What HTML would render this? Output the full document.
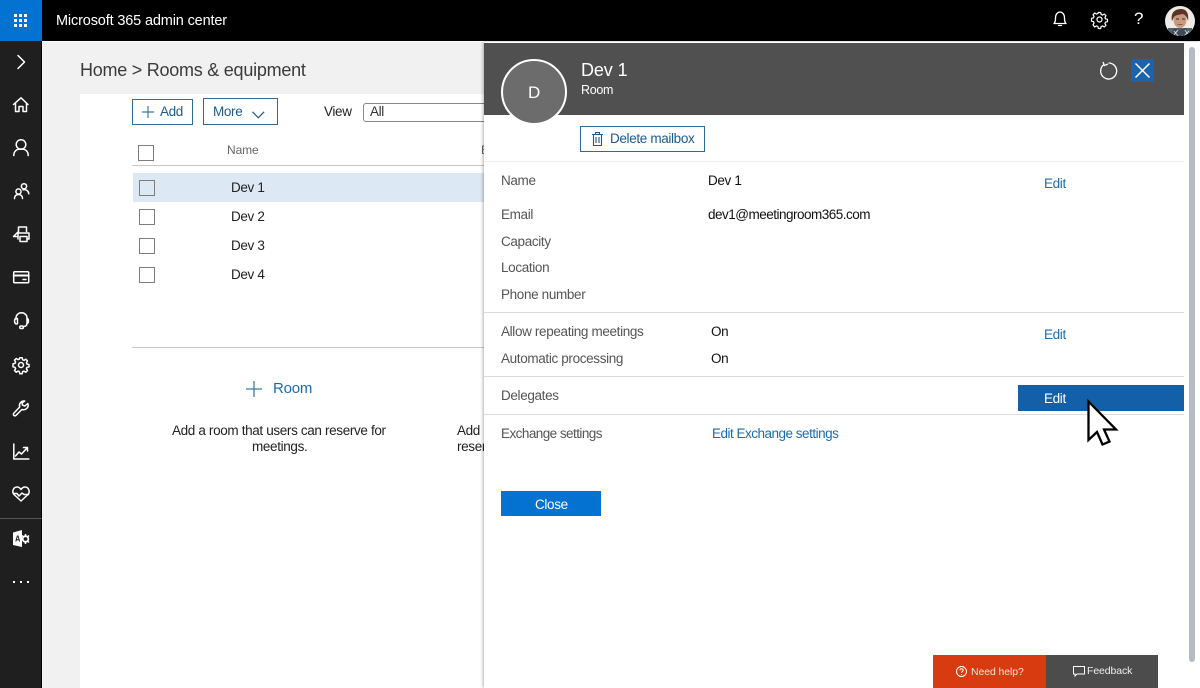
<!DOCTYPE html>
<html>
<head>
<meta charset="utf-8">
<style>
html,body{margin:0;padding:0}
body{width:1200px;height:688px;overflow:hidden;position:relative;background:#fff;font-family:"Liberation Sans",sans-serif;color:#222;font-size:13.5px}
.a,.t{position:absolute}
.t{white-space:nowrap;line-height:18px;letter-spacing:-.35px}
.cb{position:absolute;width:14px;height:14px;border:1px solid #7d7d7d;background:#fff}
.hr{position:absolute;height:1px;background:#dcdcdc}
.lab{color:#555}
.lnk{color:#1a6dac}
svg{position:absolute;overflow:visible}
.ic{fill:none;stroke:#fff;stroke-width:1.5;stroke-linecap:round;stroke-linejoin:round}
.btn{box-sizing:border-box;border:1px solid #2f6b97}
</style>
</head>
<body>
<!-- page bg -->
<div class="a" style="left:42px;top:42px;width:1158px;height:646px;background:#f1f1f1"></div>
<div class="a" style="left:80px;top:94px;width:410px;height:594px;background:#fff"></div>

<!-- top bar -->
<div class="a" style="left:0;top:0;width:1200px;height:41px;background:#000"></div>
<div class="a" style="left:0;top:0;width:42px;height:41px;background:#0472d0"></div>
<svg style="left:14px;top:14px" width="14" height="14" fill="#fff">
<rect x="0" y="0" width="3" height="3"/><rect x="5" y="0" width="3" height="3"/><rect x="10" y="0" width="3" height="3"/>
<rect x="0" y="5" width="3" height="3"/><rect x="5" y="5" width="3" height="3"/><rect x="10" y="5" width="3" height="3"/>
<rect x="0" y="10" width="3" height="3"/><rect x="5" y="10" width="3" height="3"/><rect x="10" y="10" width="3" height="3"/>
</svg>
<div class="t" style="left:56px;top:12px;color:#fff;font-size:14.5px;letter-spacing:-.15px">Microsoft 365 admin center</div>

<!-- top right icons -->
<svg class="ic" style="left:1052px;top:11px;stroke-width:1.300" width="16" height="16"><path d="M2 12.500c1.500-1.500 1.500-3 1.500-5.500C3.500 3.500 5.500 1 8 1s4.500 2.500 4.500 6c0 2.500 0 4 1.500 5.500z"/><path d="M6.500 14.500h3"/></svg>
<svg class="ic" style="left:1092px;top:12px;stroke-width:1.200" width="16" height="16"><circle cx="7.500" cy="7.500" r="2.500"/><path d="M6.300 0.500h2.400l.4 2 1.400.6 1.800-1.100 1.700 1.700-1.100 1.800.6 1.400 2 .4v2.400l-2 .4-.6 1.400 1.100 1.800-1.700 1.700-1.800-1.100-1.400.6-.4 2H6.300l-.4-2-1.400-.6-1.800 1.100L1 12.800l1.100-1.800-.6-1.400-2-.4V6.300l2-.4.6-1.400L1 2.700 2.700 1l1.800 1.100 1.400-.6z"/></svg>
<div class="t" style="left:1134px;top:10px;color:#fff;font-size:17px;letter-spacing:0">?</div>
<svg style="left:1165px;top:6px" width="30" height="30" viewBox="0 0 30 30">
<defs><clipPath id="av"><circle cx="15" cy="15" r="15"/></clipPath></defs>
<g clip-path="url(#av)">
<rect width="30" height="30" fill="#efeae6"/>
<rect x="3" y="22" width="24" height="8" fill="#56606a"/>
<path d="M5 30l4-8 6 2 6-2 4 8z" fill="#3e4a55"/>
<path d="M9 25l4 5M13 24l-5 6M20 24l4 6M24 25l-5 5" stroke="#c9d0d6" stroke-width="1" fill="none"/>
<ellipse cx="15" cy="14" rx="6.500" ry="8" fill="#c99a80"/>
<path d="M7 15C5 5 12 3 16 3c6 0 8 5 7 12-1-4-3-7-6-7-3 1-7 1-8 3z" fill="#5a3426"/>
<rect x="11" y="12.500" width="3" height="1" fill="#3a2a20"/><rect x="17" y="12.500" width="3" height="1" fill="#3a2a20"/>
<rect x="12.500" y="18" width="5" height="1" fill="#8b5a4a"/>
</g></svg>

<!-- left nav -->
<div class="a" style="left:0;top:41px;width:42px;height:647px;background:#1f1f1f;border-right:1px solid #000;box-sizing:border-box"></div>
<div class="a" style="left:0;top:518px;width:42px;height:1px;background:#555"></div>
<svg class="ic" style="left:17px;top:55px" width="10" height="14"><path d="M1 .5l6.500 6.500-6.500 6.500"/></svg>
<svg class="ic" style="left:13px;top:97px" width="16" height="16"><path d="M.5 7.500L8 .8l7 6.700M2.500 6v8.500h3.500v-5h4v5h3.500V6"/></svg>
<svg class="ic" style="left:13px;top:139px" width="16" height="18"><circle cx="8" cy="5.500" r="4.800"/><path d="M.8 16.500c0-4.500 3-6.500 7.200-6.500s7.200 2 7.200 6.500"/></svg>
<svg class="ic" style="left:14px;top:183px" width="15" height="16"><circle cx="10" cy="3.300" r="2.600"/><circle cx="4.500" cy="8.500" r="2.600"/><path d="M.5 15.500c0-2.500 1.500-4 4-4s4 1.500 4 4M9 6.800c3-.8 5.500 1 5.800 4"/></svg>
<svg class="ic" style="left:13px;top:226px" width="17" height="17"><path d="M5.500 6V1h8v4.500M5 10.500H.5L5 6"/><path d="M5 13V7h11v6h-2"/><rect x="7" y="10.500" width="7" height="5"/></svg>
<svg class="ic" style="left:13px;top:271px" width="16" height="13"><rect x=".7" y=".7" width="15" height="11" rx="1"/><path d="M.7 4.500h15" stroke-width="2"/><path d="M10 8.500h3"/></svg>
<svg class="ic" style="left:14px;top:312px" width="15" height="18"><path d="M2 7V6C2 3 4.300.8 7.500.8S13 3 13 6v5c0 2.500-1.500 3.500-3.500 3.500"/><path d="M2 6.500c-1.200.3-1.400 1-1.400 2v1c0 1 .6 2 1.400 2.500 .8 0 1.500 0 1.500-.5V6.500zM13 6.500c1 .3 1.400 1 1.400 2v1c0 1-.6 1.800-1.400 1.800"/><rect x="5.800" y="14" width="3.500" height="2.500" rx="1"/></svg>
<svg class="ic" style="left:13px;top:357px" width="16" height="16"><circle cx="8" cy="8" r="2.500"/><path d="M6.800 .7h2.400l.4 2 1.400.6 1.800-1.100 1.700 1.700-1.100 1.800.6 1.400 2 .4v2.400l-2 .4-.6 1.400 1.100 1.800-1.700 1.700-1.800-1.100-1.400.6-.4 2H6.800l-.4-2-1.400-.6-1.800 1.100-1.700-1.700 1.100-1.800-.6-1.400-2-.4V6.800l2-.4.6-1.400-1.100-1.800 1.700-1.700 1.800 1.100 1.400-.6z"/></svg>
<svg class="ic" style="left:13px;top:400px" width="17" height="17"><path d="M10.500 1a4.500 4.500 0 0 0-3.800 6L1 13c-.8.8-.8 1.800-.2 2.400s1.700.6 2.400-.2l5.800-5.800A4.500 4.500 0 0 0 14.800 3.500L12 6l-2.500-.8L9 3l2.700-2z"/></svg>
<svg class="ic" style="left:13px;top:444px" width="16" height="16"><path d="M.8 0v15h15"/><path d="M2.500 12L6 8l2.500 2 5.500-6M10.500 3.500H14.500V7"/></svg>
<svg class="ic" style="left:12px;top:486px" width="18" height="16"><path d="M9 15L2 8.500C-.5 5.500 1.500 1 5 1c2 0 3 1 4 2.500C10 2 11 1 13 1c3.500 0 5.500 4.500 3 7.500z"/><path d="M1.500 7.500h3.500l2 2.500 3-3 2 1.500h4.500"/></svg>
<svg style="left:12px;top:530px" width="18" height="18"><path d="M1 2.500l9-2.500v17l-9-2z" fill="#fff"/><path d="M3.800 11.500l1.500-5.500h.8l1.500 5.500M4.300 9.800h2.800" stroke="#1f1f1f" fill="none" stroke-width="1"/><circle cx="13.500" cy="9" r="2.800" fill="none" stroke="#fff" stroke-width="1.800"/><path d="M13.500 4v2M13.500 12v2M17 5.500l-1.500 1.500M17 12.500L15.500 11M10 5.500l1.500 1.500" stroke="#fff" stroke-width="1.500" fill="none"/></svg>
<svg style="left:13px;top:581px" width="16" height="3" fill="#fff"><rect x="0" y="0" width="2" height="2"/><rect x="7" y="0" width="2" height="2"/><rect x="14" y="0" width="2" height="2"/></svg>

<!-- breadcrumb -->
<div class="t" style="left:80px;top:58px;font-size:18px;line-height:24px;color:#3b3b3b;letter-spacing:-.25px">Home &gt; Rooms &amp; equipment</div>

<!-- toolbar -->
<div class="a btn" style="left:132px;top:99px;width:61px;height:26px"></div>
<svg style="left:142px;top:106px" width="12" height="12" stroke="#3a7ba8" stroke-width="1.200"><path d="M6 0v12M0 6h12"/></svg>
<div class="t lnk" style="left:160px;top:103px;color:#1d5a8e">Add</div>
<div class="a btn" style="left:203px;top:98px;width:75px;height:27px"></div>
<div class="t lnk" style="left:213px;top:103px;color:#1d5a8e">More</div>
<svg style="left:252px;top:111px" width="13" height="8" fill="none" stroke="#1d5a8e" stroke-width="1.200"><path d="M.5 .8l5.800 6 5.800-6"/></svg>
<div class="t" style="left:324px;top:103px">View</div>
<div class="a" style="left:363px;top:103px;width:130px;height:17px;border:1px solid #888;border-radius:3px;background:#fff"></div>
<div class="t" style="left:370px;top:103px;color:#333">All</div>

<!-- table -->
<div class="cb" style="left:138px;top:145px"></div>
<div class="t" style="left:227px;top:141px;font-size:12px;letter-spacing:-.1px;color:#666">Name</div>
<div class="t" style="left:481px;top:141px;font-size:12px;color:#666">E</div>
<div class="a" style="left:132px;top:165px;width:352px;height:1px;background:#c8c8c8"></div>
<div class="a" style="left:133px;top:173px;width:351px;height:29px;background:#dce8f3"></div>
<div class="cb" style="left:139px;top:180px;background:#dce8f3"></div>
<div class="t" style="left:231px;top:179px">Dev 1</div>
<div class="cb" style="left:139px;top:209px"></div>
<div class="t" style="left:231px;top:208px">Dev 2</div>
<div class="cb" style="left:139px;top:238px"></div>
<div class="t" style="left:231px;top:237px">Dev 3</div>
<div class="cb" style="left:139px;top:267px"></div>
<div class="t" style="left:231px;top:266px">Dev 4</div>

<div class="a" style="left:132px;top:347px;width:352px;height:1px;background:#c8c8c8"></div>
<svg style="left:246px;top:381px" width="16" height="16" stroke="#3a7ba8" stroke-width="1.300"><path d="M8 0v16M0 8h16"/></svg>
<div class="t lnk" style="left:273px;top:379px;font-size:15px;line-height:20px;letter-spacing:-.2px">Room</div>
<div class="t" style="left:172px;top:422px">Add a room that users can reserve for</div>
<div class="t" style="left:252px;top:438px">meetings.</div>
<div class="t" style="left:457px;top:422px">Add</div>
<div class="t" style="left:457px;top:438px">reser</div>

<!-- panel -->
<div class="a" style="left:484px;top:42px;width:716px;height:646px;background:#fff;box-shadow:-1px 0 3px rgba(0,0,0,.3)"></div>
<div class="a" style="left:484px;top:43px;width:700px;height:72px;background:#505050"></div>
<div class="a" style="left:1184px;top:42px;width:16px;height:646px;background:#fff"></div>
<div class="a" style="left:1189px;top:47px;width:6px;height:615px;background:#b4bbc3;border-radius:3px"></div>

<div class="a" style="left:501px;top:59px;width:62px;height:62px;border:2px solid #fff;border-radius:50%;background:#6c6c6c"></div>
<div class="t" style="left:528px;top:84px;color:#fff;font-size:17px;letter-spacing:0">D</div>
<div class="t" style="left:581px;top:58px;color:#fff;font-size:18px;line-height:24px;letter-spacing:-.1px">Dev 1</div>
<div class="t" style="left:581px;top:81px;color:#fff;font-size:12.500px;letter-spacing:-.3px">Room</div>

<svg style="left:1100px;top:62px" width="18" height="18" fill="none" stroke="#fff" stroke-width="1.300"><path d="M4 2.500A8 8 0 1 0 8.500 1"/><path d="M3 0L4.500 3.500 8 2" /></svg>
<div class="a" style="left:1131px;top:59px;width:23px;height:23px;background:#1c62ac;border-radius:2px"></div>
<svg style="left:1135px;top:63px" width="15" height="15" stroke="#fff" stroke-width="1.500"><path d="M.5 .5l14 14M14.500 .5l-14 14"/></svg>

<div class="a btn" style="left:580px;top:126px;width:125px;height:26px"></div>
<svg style="left:592px;top:132px" width="11" height="14" fill="none" stroke="#1d5a8e" stroke-width="1.100"><path d="M0 2.500h11M3.500 2.500V.6h4v1.900M1.500 2.500v11h8v-11M4 5v6M7 5v6"/></svg>
<div class="t" style="left:610px;top:130px;color:#1d5a8e">Delete mailbox</div>
<div class="hr" style="left:484px;top:161px;width:700px;background:#eee"></div>

<div class="t lab" style="left:501px;top:172px">Name</div>
<div class="t" style="left:708px;top:172px;color:#111">Dev 1</div>
<div class="t lnk" style="left:1044px;top:175px">Edit</div>
<div class="t lab" style="left:501px;top:206px">Email</div>
<div class="t" style="left:708px;top:206px;color:#111;letter-spacing:-.5px">dev1@meetingroom365.com</div>
<div class="t lab" style="left:501px;top:233px">Capacity</div>
<div class="t lab" style="left:501px;top:259px">Location</div>
<div class="t lab" style="left:501px;top:286px">Phone number</div>
<div class="hr" style="left:484px;top:312px;width:700px"></div>
<div class="t lab" style="left:501px;top:323px">Allow repeating meetings</div>
<div class="t" style="left:711px;top:323px;color:#111">On</div>
<div class="t lnk" style="left:1044px;top:326px">Edit</div>
<div class="t lab" style="left:501px;top:350px">Automatic processing</div>
<div class="t" style="left:711px;top:350px;color:#111">On</div>
<div class="hr" style="left:484px;top:376px;width:700px"></div>
<div class="t lab" style="left:501px;top:387px">Delegates</div>
<div class="a" style="left:1018px;top:385px;width:166px;height:26px;background:#1460a8"></div>
<div class="t" style="left:1044px;top:390px;color:#fff">Edit</div>
<div class="hr" style="left:484px;top:414px;width:700px"></div>
<div class="t lab" style="left:501px;top:425px;letter-spacing:-.55px">Exchange settings</div>
<div class="t lnk" style="left:712px;top:425px;letter-spacing:-.5px">Edit Exchange settings</div>

<div class="a" style="left:501px;top:491px;width:100px;height:25px;background:#0472d0"></div>
<div class="t" style="left:535px;top:496px;color:#fff">Close</div>

<!-- cursor -->
<svg style="left:1087px;top:400px" width="31" height="47" viewBox="0 0 31 47"><path d="M1.500 1.500V40l8.500-8 5.500 12.500 7-3-5.500-12H29z" fill="#fff" stroke="#000" stroke-width="2.300" stroke-linejoin="miter"/></svg>

<!-- footer buttons -->
<div class="a" style="left:933px;top:655px;width:113px;height:33px;background:#d83b0f"></div>
<div class="a" style="left:1046px;top:655px;width:112px;height:33px;background:#4c4c4c"></div>
<svg style="left:956px;top:666px" width="11" height="11" fill="none" stroke="#fff"><circle cx="5.500" cy="5.500" r="5"/><path d="M4 4.300c0-2 3.200-2 3.200 0 0 1.200-1.700 1.200-1.700 2.600M5.500 8v1"/></svg>
<div class="t" style="left:971px;top:663px;color:#f5e4de;font-size:10.500px;letter-spacing:-.1px">Need help?</div>
<svg style="left:1073px;top:666px" width="12" height="11" fill="none" stroke="#fff"><path d="M.5 .5h11v7.500H4L2 10V8H.5z"/></svg>
<div class="t" style="left:1087px;top:662px;color:#eee;font-size:10.500px;letter-spacing:-.1px">Feedback</div>
</body>
</html>
